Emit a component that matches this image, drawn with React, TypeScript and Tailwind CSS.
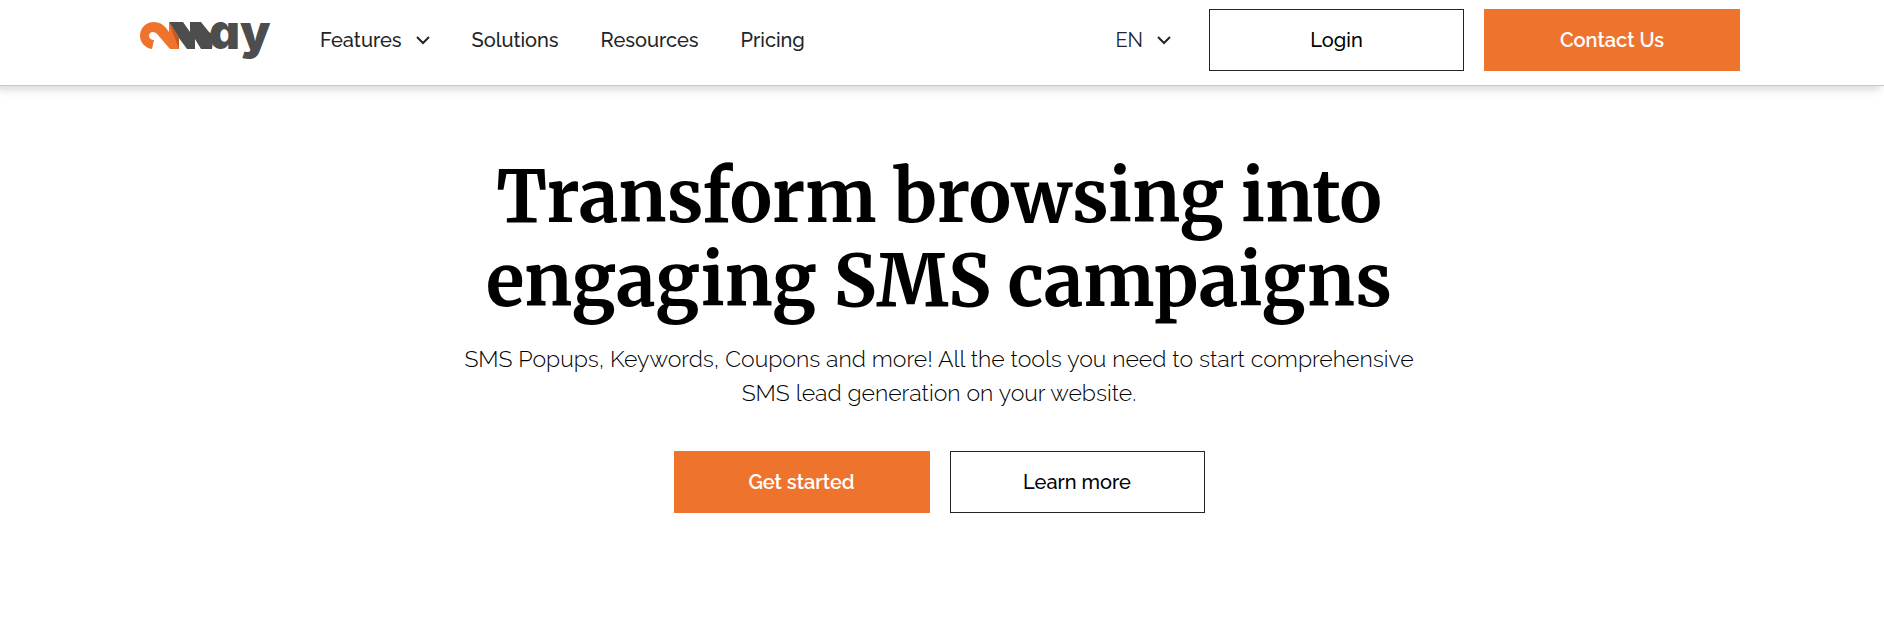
import React from "react";

const links = ["Solutions", "Resources", "Pricing"];

const Logo = () => {
	return (
		<a href="#home" aria-label="2way" className="shrink-0">
			<svg width="130" height="38" viewBox="0 0 130 38" className="overflow-visible" aria-hidden="true">
				{/* folded ribbon */}
				<path
					d="M29 1H43L50 11V1H61L69 11L74 14L72 28H61L55 18V28H47L39 17Z"
					fill="#4d4d4d"
				/>
				<path
					d="M12 28C5 27 0 21 0 15C0 7 6 1 14 1C19 1 23 3 26 7L29 11V1L39 17V28H30L18 14C14 9 9 11 9 15C9 17 11 19 14 19Z"
					fill="#ef732d"
				/>
				<path d="M29 1L39 17V28Z" fill="#c2591f" />
				<text x="69" y="28" className="fill-[#4d4d4d] font-['Inter'] text-[48px] font-black">
					ɑy
				</text>
			</svg>
		</a>
	);
};

const Chevron = () => {
	return (
		<svg width="14" height="9" viewBox="0 0 14 9" fill="none" aria-hidden="true">
			<path d="M1 1L7 7L13 1" stroke="#212529" strokeWidth="2" />
		</svg>
	);
};

const Header = () => {
	return (
		<header className="border-b border-[#c6cac8] bg-white pt-[9px] pr-1 pb-[14px] shadow-[-4px_4px_8px_rgba(0,0,0,0.15)]">
			<div className="mx-auto flex max-w-[1600px] items-center">
				<Logo />
				<nav className="ml-[50px] flex items-center gap-[42px] text-xl font-medium">
					<button type="button" className="flex items-center gap-[14px]">
						Features
						<Chevron />
					</button>
					{links.map((link) => (
						<a key={link} href={`#${link.toLowerCase()}`}>
							{link}
						</a>
					))}
				</nav>
				<div className="ml-auto flex items-center gap-5 text-xl">
					<button type="button" className="mr-[18px] flex items-center gap-[14px]">
						EN
						<Chevron />
					</button>
					<button type="button" className="h-[62px] w-[255px] border border-[#212529] font-medium text-black">
						Login
					</button>
					<button type="button" className="h-[62px] w-64 bg-[#ee732d] font-semibold text-white">
						Contact Us
					</button>
				</div>
			</div>
		</header>
	);
};

const Hero = () => {
	return (
		<section id="home" className="flex flex-col items-center pt-[69px] pr-1.5 text-center">
			<h1 className="max-w-[1000px] font-['Merriweather',serif] text-[71px] leading-[84px] font-bold text-black">
				Transform browsing into engaging SMS campaigns
			</h1>
			<p className="mt-[19px] max-w-[960px] text-[23px] leading-[34px] font-light text-black">
				SMS Popups, Keywords, Coupons and more! All the tools you need to start comprehensive SMS lead
				generation on your website.
			</p>
			<div className="mt-[41px] flex gap-5 text-xl">
				<button type="button" className="h-[62px] w-64 bg-[#ee732d] font-semibold text-white">
					Get started
				</button>
				<button type="button" className="h-[62px] w-[255px] border border-[#212529] font-medium text-black">
					Learn more
				</button>
			</div>
		</section>
	);
};

export default function App() {
	return (
		<div className="bg-white font-['Raleway','Lato',sans-serif] text-[#212529]">
			<Header />
			<Hero />
		</div>
	);
}
